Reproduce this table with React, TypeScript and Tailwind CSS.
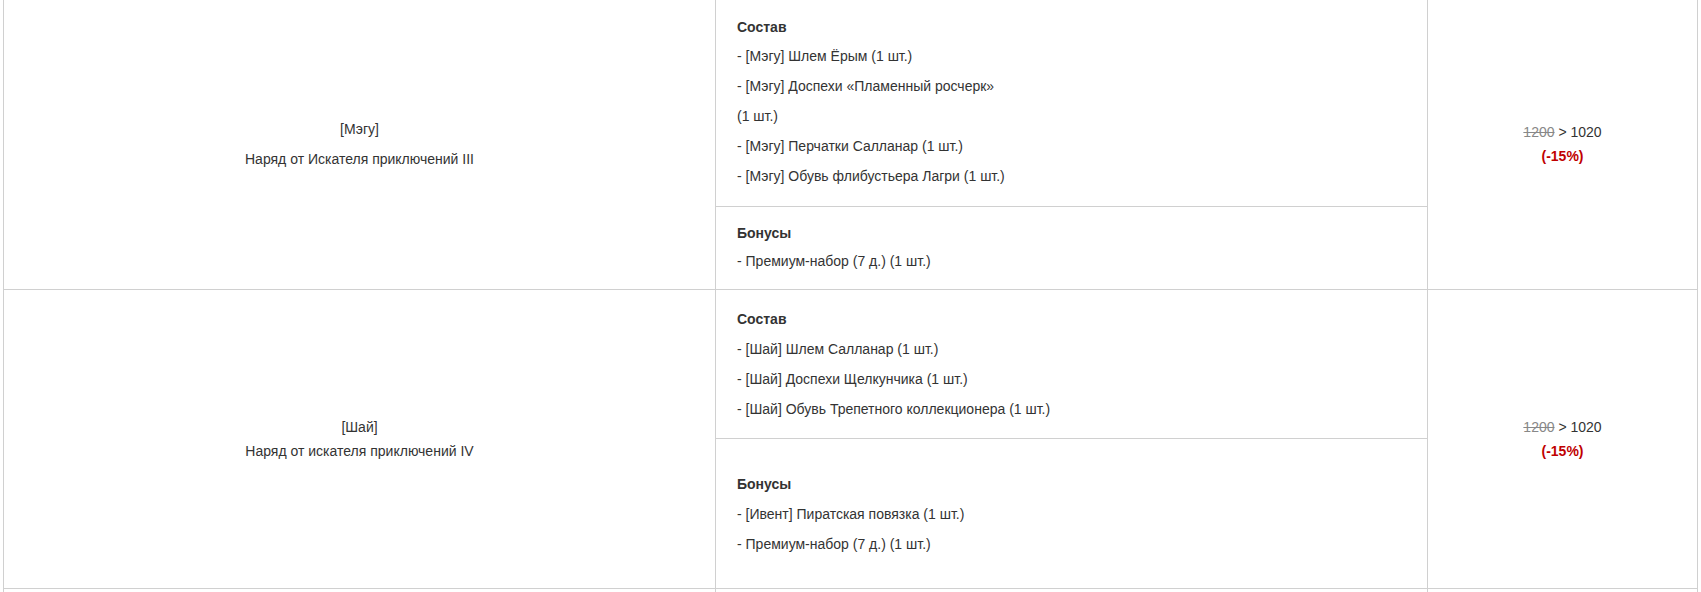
import React from 'react';

interface Section {
    title: string;
    items: string[];
    height: string;
    padTop: string;
    titleGap: string;
}

interface SetRow {
    tag: string;
    name: string;
    loose: boolean;
    sections: Section[];
    oldPrice: string;
    newPrice: string;
    discount: string;
}

const rows: SetRow[] = [
    {
        tag: '[Мэгу]',
        name: 'Наряд от Искателя приключений III',
        loose: true,
        sections: [
            {
                title: 'Состав',
                items: [
                    '- [Мэгу] Шлем Ёрым (1 шт.)',
                    '- [Мэгу] Доспехи «Пламенный росчерк»',
                    '(1 шт.)',
                    '- [Мэгу] Перчатки Салланар (1 шт.)',
                    '- [Мэгу] Обувь флибустьера Лагри (1 шт.)',
                ],
                height: 'h-[209px]',
                padTop: 'pt-[19px]',
                titleGap: 'mb-[9px]',
            },
            {
                title: 'Бонусы',
                items: ['- Премиум-набор (7 д.) (1 шт.)'],
                height: 'h-[82px]',
                padTop: 'pt-[16px]',
                titleGap: 'mb-[8px]',
            },
        ],
        oldPrice: '1200',
        newPrice: '1020',
        discount: '(-15%)',
    },
    {
        tag: '[Шай]',
        name: 'Наряд от искателя приключений IV',
        loose: false,
        sections: [
            {
                title: 'Состав',
                items: [
                    '- [Шай] Шлем Салланар (1 шт.)',
                    '- [Шай] Доспехи Щелкунчика (1 шт.)',
                    '- [Шай] Обувь Трепетного коллекционера (1 шт.)',
                ],
                height: 'h-[149px]',
                padTop: 'pt-[19px]',
                titleGap: 'mb-[10px]',
            },
            {
                title: 'Бонусы',
                items: ['- [Ивент] Пиратская повязка (1 шт.)', '- Премиум-набор (7 д.) (1 шт.)'],
                height: 'h-[149px]',
                padTop: 'pt-[35px]',
                titleGap: 'mb-[10px]',
            },
        ],
        oldPrice: '1200',
        newPrice: '1020',
        discount: '(-15%)',
    },
];

function SectionBlock({ section, last }: { section: Section; last: boolean }) {
    return (
        <div className={`${section.height} ${section.padTop} pl-[21px] ${last ? '' : 'border-b border-[#d0d0d0]'}`}>
            <p className={`font-bold leading-[20px] ${section.titleGap}`}>{section.title}</p>
            <div className="flex flex-col gap-[10px]">
                {section.items.map((item, i) => (
                    <p key={i} className="leading-[20px]">{item}</p>
                ))}
            </div>
        </div>
    );
}

export default function App() {
    return (
        <div className="bg-white h-[592px] overflow-hidden">
            <div
                className="mx-[3px] -mt-[2px] border-r border-[#d0d0d0] text-[14px] text-[#333]"
                style={{ fontFamily: '"Liberation Sans", Arial, sans-serif' }}
            >
                {rows.map((row, idx) => (
                    <div key={idx} className="grid grid-cols-[712px_712px_1fr] border-b border-[#d0d0d0]">
                        {/* Name */}
                        <div className="border-l border-[#d0d0d0] flex flex-col items-center justify-center text-center">
                            {row.loose ? (
                                <div className="flex flex-col gap-[10px]">
                                    <p className="leading-[20px]">{row.tag}</p>
                                    <p className="leading-[20px]">{row.name}</p>
                                </div>
                            ) : (
                                <p className="leading-[24px]">
                                    {row.tag}
                                    <br />
                                    {row.name}
                                </p>
                            )}
                        </div>

                        {/* Contents */}
                        <div className="border-l border-[#d0d0d0] flex flex-col">
                            {row.sections.map((s, i) => (
                                <SectionBlock key={i} section={s} last={i === row.sections.length - 1} />
                            ))}
                        </div>

                        {/* Price */}
                        <div className="border-l border-[#d0d0d0] flex items-center justify-center text-center">
                            <p className="leading-[24px]">
                                <span className="line-through text-[#888]">{row.oldPrice}</span> &gt; {row.newPrice}
                                <br />
                                <span className="font-bold text-[#c00000]">{row.discount}</span>
                            </p>
                        </div>
                    </div>
                ))}

                {/* next row, cut off by the viewport */}
                <div className="grid grid-cols-[712px_712px_1fr] h-[40px]">
                    <div className="border-l border-[#d0d0d0]" />
                    <div className="border-l border-[#d0d0d0]" />
                    <div className="border-l border-[#d0d0d0]" />
                </div>
            </div>
        </div>
    );
}
